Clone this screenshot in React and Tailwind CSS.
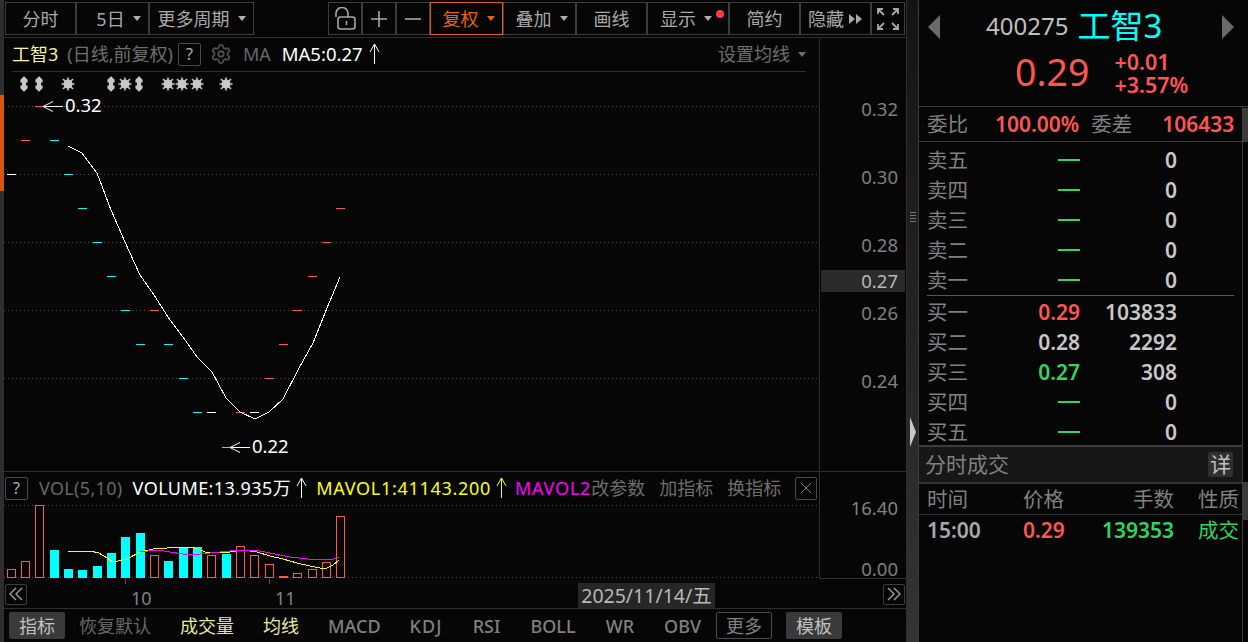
import { Settings } from "lucide-react";

const RED = "#ff5555";
const CYAN = "#00ffff";

// [x, y, colour] - x is the left end of a 9px dash
const ticks = [
  [21, 140, RED], [50, 140, CYAN], [7, 174, "#ffffff"], [64, 174, CYAN], [78, 208, CYAN],
  [93, 242, CYAN], [107, 276, CYAN], [121, 310, CYAN], [150, 310, RED], [136, 344, CYAN],
  [164, 344, CYAN], [179, 378, CYAN], [193, 412, CYAN], [207, 412, "#ffffff"], [236, 412, RED],
  [250, 412, "#ffffff"], [265, 378, RED], [279, 344, RED], [293, 310, RED], [308, 276, RED],
  [322, 242, RED], [336, 208, RED], [222, 447, CYAN], [35, 106, RED],
];

const maLine =
  "68,146 82,153 97,173 111,210 125,242 140,275 154,295 168,317 183,337 197,357 212,372 226,398 240,412 255,419 269,412 283,399 298,370 313,343 327,308 340,277";

// [x, top, filled]
const volBars = [
  [7, 569, 0], [21, 561, 0], [35, 505, 0], [50, 550, 1], [64, 569, 1], [78, 570, 1], [93, 566, 1], [107, 553, 1],
  [121, 537, 1], [136, 533, 1], [150, 555, 0], [164, 561, 1], [179, 548, 1], [193, 547, 1], [207, 555, 0], [222, 554, 1],
  [236, 546, 0], [250, 555, 0], [265, 564, 0], [279, 576, 0], [293, 573, 0], [308, 569, 0], [322, 562, 0], [336, 516, 0],
];

const volYellow =
  "68,551 90,551 99,553 107,558 113,562 127,559 140,552 153,549 167,548 180,547 192,547 200,550 208,553 230,552 243,550 257,552 270,556 283,559 297,563 310,566 325,569 333,565 339,560";
const volPink =
  "140,552 157,550 170,552 183,554 200,554 220,552 240,550 255,550 270,553 290,557 308,559 325,560 333,559 339,557";

const Caret = ({ className = "border-t-[#b0b0b0]" }) => (
  <span className={`ml-[8px] inline-block border-x-[4px] border-t-[5px] border-x-transparent ${className}`}></span>
);

const ToolBtn = ({ w, children, caret, dot }) => (
  <div className={`relative flex h-[33px] items-center justify-center border border-[#3c3c3c] text-[#a8a8a8] ${w}`}>
    {children}
    {caret && <Caret />}
    {dot && <span className="absolute right-[4px] top-[7px] h-[8px] w-[8px] rounded-full bg-[#ff3b3b]"></span>}
  </div>
);

const UpArrow = ({ className }) => (
  <svg width="11" height="22" viewBox="0 0 11 22" className={className} fill="none" stroke="currentColor" strokeWidth="1">
    <path d="M5.5 1V21M5.5 1L1 9M5.5 1L10 9" />
  </svg>
);

const HelpBox = () => (
  <span className="flex h-[23px] w-[23px] shrink-0 items-center justify-center rounded-[2px] border border-[#4a4a4a] text-[16px] text-[#b0b0b0]">?</span>
);

const Star = ({ x }) => (
  <g>
    <circle cx={x} cy="84" r="4.5" fill="#c8c8c8" />
    <path
      d={`M${x - 6.5} 84H${x + 6.5}M${x} 77.5V90.5M${x - 5} 79L${x + 5} 89M${x - 5} 89L${x + 5} 79`}
      stroke="#c8c8c8"
      strokeWidth="1.6"
    />
  </g>
);

const Updown = ({ x }) => (
  <path
    d={`M${x} 77L${x + 3} 80V82H${x + 1.5}V86H${x + 3}V88L${x} 91L${x - 3} 88V86H${x - 1.5}V82H${x - 3}V80Z`}
    fill="#c8c8c8"
    stroke="#c8c8c8"
    strokeWidth="1.2"
  />
);

const AxisLabel = ({ className, children }) => (
  <span className={`absolute right-[8px] text-[18.5px] leading-[24px] text-[#808080] ${className}`}>{children}</span>
);

const PagerBtn = ({ flip }) => (
  <span className="flex h-[21px] w-[22px] items-center justify-center rounded-[2px] border border-[#3c3c3c]">
    <svg width="14" height="14" viewBox="0 0 14 14" fill="none" stroke="#a0a0a0" strokeWidth="1.4" className={flip ? "rotate-180" : ""}>
      <path d="M7 1L1 7L7 13M13 1L7 7L13 13" />
    </svg>
  </span>
);

const QuoteRow = ({ label, price, priceColor, volume }) => (
  <div className="flex h-[30px] shrink-0 items-center pl-[8px] text-[21px] font-semibold text-[#c8c8c8]">
    <span className="w-[112px] shrink-0 text-[20.5px] font-normal text-[#808080]">{label}</span>
    <span className={`flex w-[41px] shrink-0 justify-end ${priceColor}`}>
      {price || <span className="h-[2px] w-[22px] bg-[#2ed65e]"></span>}
    </span>
    <span className="w-[97px] shrink-0 text-right">{volume}</span>
  </div>
);

export default function App() {
  return (
    <div className="flex h-[642px] w-[1248px] overflow-hidden bg-[#060606] font-['Noto_Sans','Noto_Sans_CJK_SC',sans-serif] text-[18px] leading-none">
      {/* left edge strip */}
      <div className="flex w-[4px] shrink-0 flex-col bg-[#2e2e2e]">
        <div className="mt-[95px] h-[96px] bg-[#d9560f]"></div>
      </div>

      <div className="flex w-[902px] shrink-0 flex-col">
        {/* toolbar */}
        <div className="flex h-[38px] shrink-0 border-b border-[#2e2e2e] pl-[1px] pt-[2px]">
          <ToolBtn w="w-[71px]">分时</ToolBtn>
          <ToolBtn w="w-[73px] pl-[12px]">5日<Caret /></ToolBtn>
          <ToolBtn w="w-[105px]">更多周期<Caret /></ToolBtn>
          <div className="ml-[74px] flex">
            <ToolBtn w="w-[34px]">
              <svg width="22" height="24" viewBox="0 0 22 24" fill="none" stroke="#a8a8a8" strokeWidth="1.6">
                <path d="M2 10V7A6 6 0 0 1 14 6V10" />
                <rect x="4" y="10" width="17" height="12" rx="2.5" />
                <path d="M12.5 14V18" />
              </svg>
            </ToolBtn>
            <ToolBtn w="w-[34px]">
              <svg width="18" height="18" viewBox="0 0 18 18" stroke="#a8a8a8" strokeWidth="1.6"><path d="M9 1V17M1 9H17" /></svg>
            </ToolBtn>
            <ToolBtn w="w-[34px]">
              <svg width="18" height="18" viewBox="0 0 18 18" stroke="#a8a8a8" strokeWidth="1.6"><path d="M1 9H17" /></svg>
            </ToolBtn>
            <div className="flex h-[33px] w-[73px] items-center justify-center border border-[#e0600f] pl-[4px] text-[#e8600f]">
              复权<Caret className="border-t-[#e8600f]" />
            </div>
            <ToolBtn w="w-[73px] pl-[4px]" caret>叠加</ToolBtn>
            <ToolBtn w="w-[71px]">画线</ToolBtn>
            <ToolBtn w="w-[82px] pr-[4px]" caret dot>显示</ToolBtn>
            <ToolBtn w="w-[71px]">简约</ToolBtn>
            <ToolBtn w="w-[71px]">
              隐藏
              <svg width="14" height="10" viewBox="0 0 14 10" fill="#a8a8a8" className="ml-[5px]"><path d="M0 0L6 5L0 10ZM7 0L13 5L7 10Z" /></svg>
            </ToolBtn>
            <ToolBtn w="w-[34px]">
              <svg width="22" height="22" viewBox="0 0 22 22" fill="none" stroke="#a8a8a8" strokeWidth="1.8">
                <path d="M1 6V1H6M16 1H21V6M21 16V21H16M6 21H1V16M1.5 1.5L7 7M20.5 1.5L15 7M20.5 20.5L15 15M1.5 20.5L7 15" />
              </svg>
            </ToolBtn>
          </div>
        </div>

        {/* price chart */}
        <div className="flex h-[433px] shrink-0">
          <div className="flex w-[816px] shrink-0 flex-col border-r border-[#2e2e2e]">
            <div className="mx-[8px] flex h-[34px] w-[794px] shrink-0 items-center border-b border-[#2e2e2e] pb-[1px]">
              <span className="text-[#f3f3a6]">工智3</span>
              <span className="ml-[9px] text-[#6e6e6e]">(日线,前复权)</span>
              <span className="ml-[5px]"><HelpBox /></span>
              <Settings size={22} color="#4c4c4c" strokeWidth={2} className="ml-[9px]" />
              <span className="ml-[11px] text-[#666]">MA</span>
              <span className="ml-[11px] text-[18.5px] text-white">MA5:0.27</span>
              <UpArrow className="ml-[6px] text-white" />
              <span className="ml-auto flex items-center text-[#6e6e6e]">
                设置均线
                <Caret className="border-t-[#6e6e6e]" />
              </span>
            </div>
            <div className="relative h-[398px]">
              <svg width="815" height="398" viewBox="4 72 815 398" className="block">
                {[106, 174, 242, 310, 378].map((y) => (
                  <line key={y} x1="4" x2="819" y1={y + 0.5} y2={y + 0.5} stroke="#4a4a4a" strokeDasharray="1 3" />
                ))}
                <Updown x={24} /><Updown x={39} /><Star x={68} />
                <Updown x={111} /><Star x={125} /><Updown x={139} />
                <Star x={168} /><Star x={182} /><Star x={197} /><Star x={226} />
                {ticks.map(([x, y, c], i) => (
                  <rect key={i} x={x} y={y} width="9" height="1" fill={c} />
                ))}
                <polyline points={maLine} fill="none" stroke="#ffffff" strokeWidth="1" shapeRendering="crispEdges" />
                <path d="M43 106.5H63M43 106.5L53 101.5M43 106.5L53 111.5" stroke="#ffffff" fill="none" />
                <path d="M230 447.5H250M230 447.5L240 442.5M230 447.5L240 452.5" stroke="#ffffff" fill="none" />
              </svg>
              <span className="absolute left-[61px] top-[21px] text-[18.5px] leading-[24px] text-white">0.32</span>
              <span className="absolute left-[248px] top-[362px] text-[18.5px] leading-[24px] text-white">0.22</span>
            </div>
          </div>
          <div className="relative flex-1">
            <AxisLabel className="top-[59px]">0.32</AxisLabel>
            <AxisLabel className="top-[127px]">0.30</AxisLabel>
            <AxisLabel className="top-[195px]">0.28</AxisLabel>
            <span className="absolute left-[1px] top-[232px] flex h-[22px] w-[84px] items-center justify-end bg-[#2b2b2b] pr-[7px] text-[18.5px] text-[#b8b8b8]">0.27</span>
            <AxisLabel className="top-[263px]">0.26</AxisLabel>
            <AxisLabel className="top-[331px]">0.24</AxisLabel>
          </div>
        </div>

        {/* volume chart */}
        <div className="flex h-[108px] shrink-0 border-t border-[#2e2e2e]">
          <div className="flex w-[816px] shrink-0 flex-col border-r border-[#2e2e2e]">
            <div className="flex h-[33px] shrink-0 items-center whitespace-nowrap pb-[1px] pl-[1px]">
              <HelpBox />
              <span className="ml-[11px] tracking-[0.33px] text-[#666]">VOL(5,10)</span>
              <span className="ml-[10px] tracking-[0.43px] text-white">VOLUME:13.935万</span>
              <UpArrow className="ml-[5px] text-white" />
              <span className="ml-[9px] tracking-[0.7px] text-[#ffff00]">MAVOL1:41143.200</span>
              <UpArrow className="ml-[5px] text-[#ffff00]" />
              <span className="ml-[8px] tracking-[0.8px] text-[#ff00ff]">MAVOL2</span>
              <span className="text-[#6e6e6e]">改参数</span>
              <span className="ml-[14px] text-[#6e6e6e]">加指标</span>
              <span className="ml-[14px] text-[#6e6e6e]">换指标</span>
              <span className="ml-[14px] flex h-[23px] w-[22px] items-center justify-center rounded-[2px] border border-[#4a4a4a]">
                <svg width="12" height="12" viewBox="0 0 12 12" stroke="#777"><path d="M1 1L11 11M11 1L1 11" /></svg>
              </span>
            </div>
            <svg width="815" height="74" viewBox="4 505 815 74" className="block">
              <line x1="4" x2="819" y1="505.5" y2="505.5" stroke="#4a4a4a" strokeDasharray="1 3" />
              <line x1="4" x2="819" y1="577.5" y2="577.5" stroke="#4a4a4a" strokeDasharray="1 3" />
              {volBars.map(([x, top, filled]) =>
                filled ? (
                  <rect key={x} x={x} y={top} width="9" height={578 - top} fill={CYAN} />
                ) : (
                  <rect key={x} x={x + 0.5} y={top + 0.5} width="8" height={577 - top} fill="none" stroke={RED} />
                )
              )}
              <polyline points={volYellow} fill="none" stroke="#ffff00" shapeRendering="crispEdges" />
              <polyline points={volPink} fill="none" stroke="#ff00ff" shapeRendering="crispEdges" />
            </svg>
          </div>
          <div className="relative flex-1 border-b border-[#2e2e2e]">
            <AxisLabel className="top-[24px]">16.40</AxisLabel>
            <AxisLabel className="top-[85px]">0.00</AxisLabel>
          </div>
        </div>

        {/* time axis */}
        <div className="relative flex h-[29px] shrink-0 items-center justify-between pl-[1px] pr-[1px] pt-[1px]">
          <PagerBtn />
          <span className="absolute left-[121px] top-0 h-[5px] w-px bg-[#555]"></span>
          <span className="absolute left-[265px] top-0 h-[5px] w-px bg-[#555]"></span>
          <span className="absolute left-[127px] top-[7px] leading-[24px] text-[#808080]">10</span>
          <span className="absolute left-[271px] top-[7px] leading-[24px] text-[#808080]">11</span>
          <span className="absolute left-[574px] top-[4px] flex h-[25px] w-[137px] items-center justify-center bg-[#262626] pt-[1px] text-[19.5px] text-[#b8b8b8]">2025/11/14/五</span>
          <PagerBtn flip />
        </div>

        {/* indicator tabs */}
        <div className="flex h-[34px] shrink-0 items-center gap-[29px] whitespace-nowrap border-t border-[#2e2e2e] pl-[5px] font-medium text-[#808080]">
          <span className="flex h-[27px] w-[56px] items-center justify-center rounded-[2px] bg-[#3a3a3a] font-normal text-[#c0c0c0]">指标</span>
          <span className="-ml-[15px] font-normal text-[#666]">恢复默认</span>
          <span className="font-normal text-[#e8e8a0]">成交量</span>
          <span className="font-normal text-[#e8e8a0]">均线</span>
          <span className="w-[52px] text-center">MACD</span>
          <span className="w-[34px] text-center tracking-[1px]">KDJ</span>
          <span className="w-[29px] text-center">RSI</span>
          <span className="w-[46px] text-center">BOLL</span>
          <span className="w-[30px] text-center">WR</span>
          <span className="w-[37px] text-center">OBV</span>
          <span className="-ml-[14px] flex h-[27px] w-[56px] items-center justify-center rounded-[2px] border border-[#4a4a4a] font-normal">更多</span>
          <span className="-ml-[15px] flex h-[27px] w-[56px] items-center justify-center rounded-[2px] bg-[#3a3a3a] font-normal text-[#c0c0c0]">模板</span>
        </div>
      </div>

      {/* splitter */}
      <div className="relative w-[12px] shrink-0 border-l border-[#2e2e2e] bg-linear-to-b from-[#141414] to-[#343434]">
        <span className="absolute left-[3px] top-[210px] h-[12px] w-[6px] bg-[repeating-linear-gradient(0deg,#777_0,#777_1px,transparent_1px,transparent_3px)]"></span>
        <span className="absolute left-[3px] top-[417px] border-y-[15px] border-l-[6px] border-y-transparent border-l-[#c8c8c8]"></span>
      </div>

      {/* quote panel */}
      <div className="flex w-[330px] shrink-0 flex-col border-l border-[#3c3c3c]">
        <div className="relative h-[107px] shrink-0 border-b border-[#3c3c3c]">
          <span className="absolute left-[9px] top-[15px] border-y-[12px] border-r-[12px] border-y-transparent border-r-[#6a6a6a]"></span>
          <span className="absolute right-[14px] top-[15px] border-y-[12px] border-l-[12px] border-y-transparent border-l-[#6a6a6a]"></span>
          <div className="flex h-[51px] items-center pl-[67px]">
            <span className="text-[24px] text-[#c0c0c0]">400275</span>
            <span className="ml-[9px] text-[33px] text-[#00ffff]">工智3</span>
          </div>
          <div className="flex items-center pl-[96px] text-[#ff5555]">
            <span className="-mt-[4px] text-[37.5px]">0.29</span>
            <div className="ml-[25px] flex flex-col gap-[1px] text-[21.5px] font-semibold leading-[22px]">
              <span>+0.01</span>
              <span>+3.57%</span>
            </div>
          </div>
        </div>

        <div className="flex flex-1">
          <div className="flex w-[324px] shrink-0 flex-col border-r border-[#3c3c3c]">
            <div className="flex h-[35px] shrink-0 items-center border-b border-[#3c3c3c] pl-[8px] text-[21px] font-semibold text-[#ff5555]">
              <span className="text-[20.5px] font-normal text-[#808080]">委比</span>
              <span className="ml-[27px]">100.00%</span>
              <span className="ml-[12px] text-[20.5px] font-normal text-[#808080]">委差</span>
              <span className="ml-[30px]">106433</span>
            </div>

            <div className="flex flex-col pt-[3px]">
              <QuoteRow label="卖五" volume="0" />
              <QuoteRow label="卖四" volume="0" />
              <QuoteRow label="卖三" volume="0" />
              <QuoteRow label="卖二" volume="0" />
              <QuoteRow label="卖一" volume="0" />
            </div>
            <div className="ml-[8px] w-[307px] border-t border-[#555]"></div>
            <div className="flex h-[149px] shrink-0 flex-col overflow-hidden pt-[1px]">
              <QuoteRow label="买一" price="0.29" priceColor="text-[#ff5555]" volume="103833" />
              <QuoteRow label="买二" price="0.28" volume="2292" />
              <QuoteRow label="买三" price="0.27" priceColor="text-[#2ed65e]" volume="308" />
              <QuoteRow label="买四" volume="0" />
              <QuoteRow label="买五" volume="0" />
            </div>

            <div className="flex h-[39px] shrink-0 items-center justify-between border-y-2 border-t-[#3c3c3c] border-b-[#333] bg-[#171717] pl-[6px] pr-[9px] text-[21px] text-[#808080]">
              分时成交
              <span className="flex h-[25px] w-[25px] items-center justify-center rounded-[2px] bg-[#303030] text-[#c0c0c0]">详</span>
            </div>
            <div className="flex h-[31px] shrink-0 items-center whitespace-nowrap border-b border-[#333] pl-[8px] text-[20.5px] text-[#808080]">
              <span className="w-[96px]">时间</span>
              <span className="w-[109px]">价格</span>
              <span className="w-[42px] text-right">手数</span>
              <span className="ml-[24px]">性质</span>
            </div>
            <div className="flex h-[31px] shrink-0 items-center whitespace-nowrap pl-[8px] text-[21px] font-semibold">
              <span className="w-[96px] text-[#a8a8a8]">15:00</span>
              <span className="w-[70px] text-[#ff5555]">0.29</span>
              <span className="w-[81px] text-right text-[#2ed65e]">139353</span>
              <span className="ml-[24px] text-[20.5px] font-normal text-[#2ed65e]">成交</span>
            </div>
          </div>
          {/* scroll thumbs */}
          <div className="relative flex-1">
            <span className="absolute inset-x-0 top-[1px] h-[34px] bg-[#3a3a3a]"></span>
            <span className="absolute inset-x-0 top-[375px] h-[38px] bg-[#3a3a3a]"></span>
          </div>
        </div>
      </div>
    </div>
  );
}
